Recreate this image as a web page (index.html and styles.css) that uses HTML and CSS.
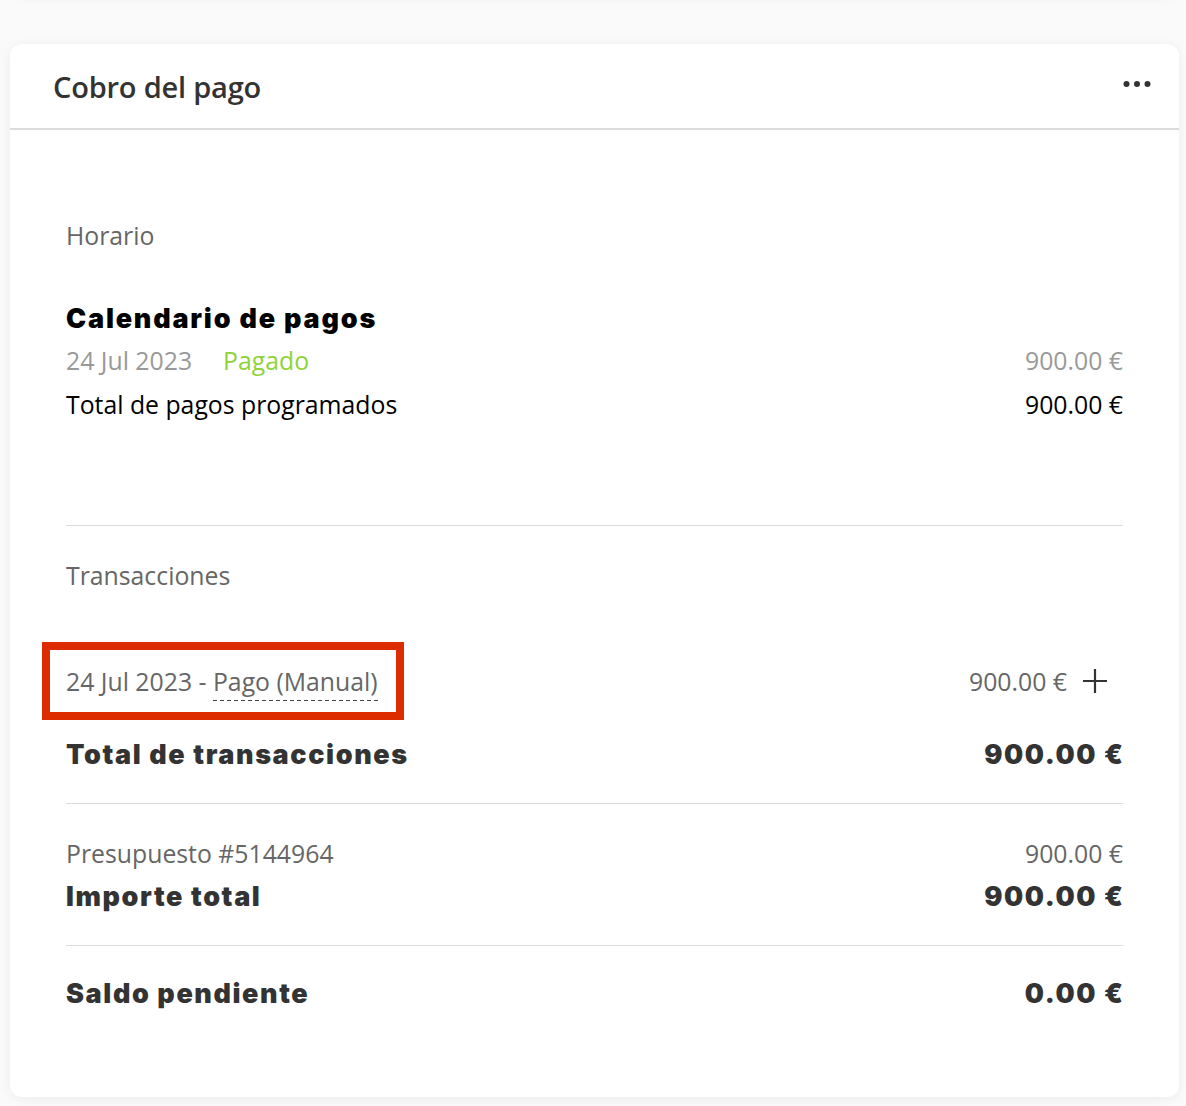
FILE: index.html
```html
<!DOCTYPE html>
<html lang="es">
<head>
<meta charset="utf-8">
<title>Cobro del pago</title>
<link rel="stylesheet" href="styles.css">
</head>
<body>
<div class="page">
  <div class="card card-top"></div>
  <section class="card">
    <header class="card-header">
      <h2 class="card-title">Cobro del pago</h2>
      <button class="more" aria-label="Más opciones">
        <svg width="28" height="8" viewBox="0 0 28 8"><circle cx="3.5" cy="4" r="3" fill="#333"/><circle cx="14" cy="4" r="3" fill="#333"/><circle cx="24.5" cy="4" r="3" fill="#333"/></svg>
      </button>
    </header>
    <div class="card-body">
      <div class="label sec-horario">Horario</div>
      <div class="heading sec-cal">Calendario de pagos</div>
      <div class="row row-date">
        <div class="left"><span class="muted">24 Jul 2023</span><span class="paid">Pagado</span></div>
        <div class="muted">900.00 €</div>
      </div>
      <div class="row row-total">
        <div>Total de pagos programados</div>
        <div>900.00 €</div>
      </div>
      <hr class="divider div-1">
      <div class="label sec-trans">Transacciones</div>
      <div class="row row-trans">
        <span class="marked">24 Jul 2023 - <span class="dashed">Pago (Manual)</span></span>
        <div class="right-group"><span class="gray">900.00 €</span>
          <svg class="plus" width="26" height="26" viewBox="0 0 26 26"><path d="M13 1v24M1 13h24" stroke="#333" stroke-width="2.2" fill="none"/></svg>
        </div>
      </div>
      <div class="row strong row-ttrans">
        <div>Total de transacciones</div>
        <div class="amt">900.00 €</div>
      </div>
      <hr class="divider div-2">
      <div class="row gray row-pres">
        <div>Presupuesto #5144964</div>
        <div>900.00 €</div>
      </div>
      <div class="row strong row-imp">
        <div>Importe total</div>
        <div class="amt">900.00 €</div>
      </div>
      <hr class="divider div-3">
      <div class="row strong row-saldo">
        <div>Saldo pendiente</div>
        <div class="amt">0.00 €</div>
      </div>
    </div>
  </section>
</div>
</body>
</html>
```

FILE: styles.css
```css
* { box-sizing: border-box; }
html, body { margin: 0; padding: 0; }
body {
  background: #fafafa;
  font-family: "Open Sans", "Noto Sans", sans-serif;
  color: #000;
}
.page {
  padding: 0 7px 9px 10px;
  position: relative;
}
.card {
  background: #fff;
  border-radius: 12px;
  box-shadow: 0 2px 12px rgba(0,0,0,0.06);
}
.card-top {
  height: 14px;
  margin-top: -20px;
  margin-bottom: 50px;
  border-radius: 0 0 12px 12px;
}
.card-header {
  height: 86px;
  border-bottom: 2px solid #dcdcdc;
  display: flex;
  align-items: center;
  justify-content: space-between;
  padding: 0 28px 0 43px;
}
.card-title {
  margin: 0;
  font-family: "Open Sans", sans-serif;
  font-weight: 600;
  font-size: 29px;
  letter-spacing: -0.2px;
  color: #333;
}
.more {
  border: 0;
  background: none;
  padding: 0;
  display: flex;
  margin-top: -4px;
}
.card-body {
  padding: 85px 56px 83px 56px;
  font-size: 24.8px;
}
.label { line-height: 40px; color: #666; }
.heading {
  line-height: 40px;
  font-family: "Inter", sans-serif;
  font-weight: 900;
  font-size: 27px;
  letter-spacing: 1.8px;
  color: #000;
}
.row {
  display: flex;
  justify-content: space-between;
  align-items: center;
  line-height: 40px;
}
.muted { color: #999; }
.gray { color: #666; }
.paid { color: #8fd33b; margin-left: 31px; }
.strong {
  font-family: "Inter", sans-serif;
  font-weight: 900;
  font-size: 27px;
  letter-spacing: 1.6px;
  color: #333;
}
.amt { margin-right: -1.6px; }
.divider {
  border: 0;
  border-top: 1px solid #dcdcdc;
  margin: 0;
}
.sec-cal { margin-top: 44px; }
.row-date { margin-top: 1px; }
.row-total { margin-top: 4px; }
.div-1 { margin-top: 101px; }
.sec-trans { margin-top: 29px; }
.row-trans { margin-top: 66px; }
.row-ttrans { margin-top: 34px; }
.div-2 { margin-top: 28px; }
.row-pres { margin-top: 29px; }
.row-imp { margin-top: 4px; }
.div-3 { margin-top: 28px; }
.row-saldo { margin-top: 28px; }
.marked {
  position: relative;
  color: #666;
}
.marked::after {
  content: "";
  position: absolute;
  left: -24px;
  right: -26px;
  top: -19px;
  bottom: -19px;
  border: 8px solid #dd2c00;
}
.dashed {
  padding-bottom: 3px;
  background-image: repeating-linear-gradient(to right, #444 0 4px, transparent 4px 7px);
  background-size: 100% 1px;
  background-position: 0 100%;
  background-repeat: no-repeat;
}
.right-group {
  display: flex;
  align-items: center;
  gap: 15px;
  margin-right: 15px;
}
.plus { display: block; }
```
